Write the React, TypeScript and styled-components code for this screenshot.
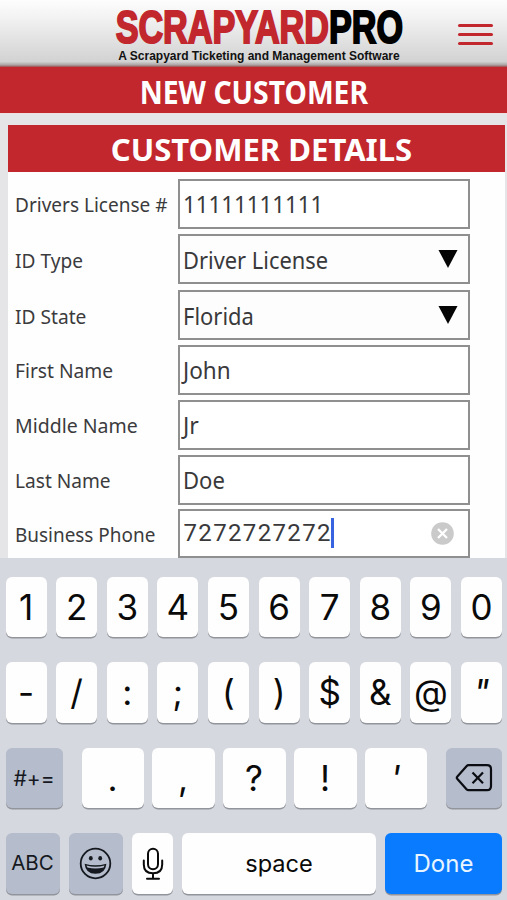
import React from 'react';
import styled, { createGlobalStyle, css } from 'styled-components';

const GlobalStyle = createGlobalStyle`
  *, *::before, *::after { box-sizing: border-box; }
  body { margin: 0; background: #e5e5e7; overflow: hidden; }
`;

const Screen = styled.main`
  width: 507px;
  height: 900px;
  display: flex;
  flex-direction: column;
  overflow: hidden;
  background: #e5e5e7;
  font-family: "Noto Sans", sans-serif;
`;

/* Condensed or expanded run of text */
const Run = styled.span<{ $scale?: number; $origin?: string }>`
  display: inline-block;
  flex: none;
  white-space: nowrap;
  transform: scaleX(${p => p.$scale ?? 1});
  transform-origin: ${p => p.$origin ?? 'left'} center;
`;

const Header = styled.header`
  flex: none;
  height: 67px;
  display: grid;
  grid-template-columns: 103px 312px 92px;
  background: linear-gradient(#fdfdfd 0%, #f3f3f3 25%, #d2d2d2 92%, #aaa3a3 97%, #a04a4c 100%);
`;

const Brand = styled.div`
  grid-column: 2;
  display: flex;
  flex-direction: column;
  align-items: center;
  padding-top: 6px;
`;

const Wordmark = styled.div`
  height: 43px;
  width: 100%;
  display: flex;
  justify-content: center;
  font: bold 45.5px/43px "Liberation Sans", Arial, sans-serif;
  color: #c1272d;
  -webkit-text-stroke: 2px #c1272d;
`;

const WordmarkDark = styled.span`
  color: #000;
  -webkit-text-stroke: 2px #000;
`;

const Tagline = styled.div`
  font: bold 12px/14px "Liberation Sans", Arial, sans-serif;
  color: #111;
  white-space: nowrap;
`;

const MenuButton = styled.button`
  border: 0;
  padding: 1px 0 0 42.5px;
  background: none;
  display: flex;
  flex-direction: column;
  justify-content: center;
  gap: 6px;
`;

const MenuBar = styled.span`
  width: 35px;
  height: 3px;
  border-radius: 2px;
  background: #c1272d;
`;

const Banner = styled.h1<{ $size: number; $height: number; $pad?: string }>`
  flex: none;
  margin: 0;
  padding: ${p => p.$pad ?? '0'};
  height: ${p => p.$height}px;
  display: flex;
  align-items: center;
  justify-content: center;
  background: #c1272d;
  color: #fff;
  font-size: ${p => p.$size}px;
  font-weight: 700;
  line-height: 1;
`;

const Body = styled.div`
  flex: 1;
  min-height: 0;
  padding: 11px 2px 0 7.5px;
  border-top: 1px solid #efdede;
`;

const Panel = styled.section`
  height: 100%;
  background: #fefefe;
  display: flex;
  flex-direction: column;
`;

const Form = styled.form`
  padding: 7.5px 0 0 7px;
  display: grid;
  grid-template-columns: 163px 292.5px;
  grid-template-rows: 55px 56px 55px 55px 55px 54px 49px;
`;

const Label = styled.label<{ $drop?: number }>`
  height: 49px;
  display: flex;
  align-items: center;
  padding-top: ${p => p.$drop ?? 2}px;
  font-size: 20.4px;
  line-height: 1;
  color: #3b3b3d;
`;

const Field = styled.div<{ $select?: boolean; $phone?: boolean }>`
  height: 49.5px;
  display: flex;
  align-items: center;
  justify-content: space-between;
  border: 2px solid #8f8f90;
  background: #fff;
  color: #39393b;
  padding: 1px 10px 0 3.5px;
  font-size: 23.6px;
  line-height: 1;
  ${Run} { padding-top: 2px; }
  ${p => p.$select && css`background: #fdfdfd; ${Run} { padding-top: 4px; }`}
  ${p => p.$phone && css`
    height: 49px;
    font: 24px/1 Roboto, sans-serif;
    letter-spacing: 1.35px;
    padding: 0 14px 1px 4px;
  `}
`;

const Entry = styled.span`
  display: flex;
  align-items: center;
`;

const Caret = styled.span`
  width: 3px;
  height: 30px;
  margin-left: -1px;
  background: #3762e0;
`;

const Keyboard = styled.section`
  flex: none;
  height: 342px;
  padding: 19px 5px 0 5.5px;
  display: flex;
  flex-direction: column;
  gap: 25.2px;
  background: #d5d8df;
  font-family: Inter, sans-serif;
`;

const KeyRow = styled.div<{ $columns: string }>`
  flex: none;
  height: 60.3px;
  display: grid;
  justify-content: space-between;
  grid-template-columns: ${p => p.$columns};
`;

const PunctuationKeys = styled.div`
  display: grid;
  grid-template-columns: 62px 63px 63px 63px 62px;
  justify-content: space-between;
`;

const Key = styled.button<{ $tone?: 'plain' | 'muted' | 'primary'; $size?: number }>`
  border: 0;
  margin: 0;
  padding: 0;
  min-width: 0;
  display: flex;
  align-items: center;
  justify-content: center;
  border-radius: 6px;
  box-shadow: 0 1.5px 0 #92959b;
  font-family: inherit;
  font-size: ${p => p.$size ?? 35}px;
  line-height: 1;
  color: #0a0a0a;
  background: #fefefe;
  ${p => p.$tone === 'muted' && css`background: #b5bccb; color: #15191f;`}
  ${p => p.$tone === 'primary' && css`background: #087bfe; color: #e9f5ff;`}
`;

/* Slanted prime marks */
const Slant = styled.span`
  display: inline-block;
  font-style: italic;
`;

const Triangle = () => (
  <svg width="20" height="18" viewBox="0 0 20 18"><path d="M.5 0h19L10 18z" fill="#050505" /></svg>
);

const ClearIcon = () => (
  <svg width="23" height="23" viewBox="0 0 23 23">
    <circle cx="11.5" cy="11.5" r="11.3" fill="#cacaca" />
    <path d="M7 7l9 9M16 7l-9 9" stroke="#fff" strokeWidth="2.3" />
  </svg>
);

const BackspaceIcon = () => (
  <svg width="38" height="30" viewBox="0 0 38 30" fill="none" stroke="#0b0d12" strokeWidth="2.2" strokeLinejoin="round">
    <path d="M13.6 2.2H32Q36 2.2 36 6.2V23Q36 27.2 32 27.2H13.6Q12.4 27.2 11.5 26.2L2.4 16Q1.2 14.7 2.4 13.4L11.5 3.2Q12.4 2.2 13.6 2.2Z" />
    <path d="M17.5 9.5l10.5 10.8M28 9.5L17.5 20.3" />
  </svg>
);

const SmileIcon = () => (
  <svg width="33" height="33" viewBox="0 0 33 33">
    <circle cx="16.5" cy="16.5" r="14.8" fill="none" stroke="#15191f" strokeWidth="1.8" />
    <ellipse cx="11.8" cy="11.3" rx="1.9" ry="2.2" fill="#15191f" />
    <ellipse cx="21.2" cy="11.3" rx="1.9" ry="2.2" fill="#15191f" />
    <path d="M5.6 16.8Q16.5 19.8 27.4 16.8Q26.5 26.8 16.5 26.8T5.6 16.8Z" fill="#15191f" />
    <path d="M7.5 18.6Q16.5 21 25.5 18.6L24.6 20.4Q16.5 22.6 8.4 20.4Z" fill="#b5bccb" />
  </svg>
);

const MicIcon = () => (
  <svg width="22" height="34" viewBox="0 0 22 34" fill="none" stroke="#0a0a0a" strokeWidth="2">
    <rect x="6" y="1.8" width="10" height="20.4" rx="5" />
    <path d="M1.8 13.5v4Q1.8 26.3 11 26.3T20.2 17.5v-4M11 26.3v5.5M5 31.8h12" strokeLinecap="round" />
  </svg>
);

const TextField = ({ label, labelScale, value, scale, select, drop }: {
  label: string; labelScale: number; value: string; scale: number; select?: boolean; drop?: number;
}) => (
  <>
    <Label $drop={drop}><Run $scale={labelScale}>{label}</Run></Label>
    <Field $select={select}>
      <Run $scale={scale}>{value}</Run>
      {select && <Triangle />}
    </Field>
  </>
);

export default function App() {
  return (
    <>
      <GlobalStyle />
      <Screen>
        <Header>
          <Brand>
            <Wordmark>
              <Run $scale={0.751} $origin="center">SCRAPYARD<WordmarkDark>PRO</WordmarkDark></Run>
            </Wordmark>
            <Tagline>A Scrapyard Ticketing and Management Software</Tagline>
          </Brand>
          <MenuButton aria-label="Menu"><MenuBar /><MenuBar /><MenuBar /></MenuButton>
        </Header>
        <Banner $size={32} $height={46} $pad="3px 0 0">
          <Run $scale={0.886} $origin="center">NEW CUSTOMER</Run>
        </Banner>
        <Body>
          <Panel>
            <Banner as="h2" $size={30.6} $height={46.5} $pad="2px 0 0 10px">
              <Run $scale={1.015} $origin="center">CUSTOMER DETAILS</Run>
            </Banner>
            <Form>
              <TextField label="Drivers License #" labelScale={0.933} value="11111111111" scale={0.945} />
              <TextField label="ID Type" labelScale={0.937} value="Driver License" scale={0.927} select drop={3} />
              <TextField label="ID State" labelScale={0.94} value="Florida" scale={0.93} select drop={3} />
              <TextField label="First Name" labelScale={0.942} value="John" scale={0.955} />
              <TextField label="Middle Name" labelScale={0.956} value="Jr" scale={0.98} drop={1} />
              <TextField label="Last Name" labelScale={0.937} value="Doe" scale={0.935} />
              <Label><Run $scale={0.928}>Business Phone</Run></Label>
              <Field $phone>
                <Entry>7272727272<Caret /></Entry>
                <ClearIcon />
              </Field>
            </Form>
          </Panel>
        </Body>
        <Keyboard>
          <KeyRow $columns="repeat(10, 41px)">
            {[...'1234567890'].map(k => <Key key={k}>{k}</Key>)}
          </KeyRow>
          <KeyRow $columns="repeat(10, 41px)">
            {[...'-/:;()$&@'].map(k => <Key key={k}>{k}</Key>)}
            <Key><Slant>"</Slant></Key>
          </KeyRow>
          <KeyRow $columns="57px 345px 56.5px">
            <Key $tone="muted" $size={21}>#+=</Key>
            <PunctuationKeys>
              {[...'.,?!'].map(k => <Key key={k}>{k}</Key>)}
              <Key><Slant>'</Slant></Key>
            </PunctuationKeys>
            <Key $tone="muted" aria-label="Delete"><BackspaceIcon /></Key>
          </KeyRow>
          <KeyRow $columns="54px 54px 41px 193.5px 117px">
            <Key $tone="muted" $size={20.5}>ABC</Key>
            <Key $tone="muted" aria-label="Emoji"><SmileIcon /></Key>
            <Key aria-label="Dictation"><MicIcon /></Key>
            <Key $size={23.6}>space</Key>
            <Key $tone="primary" $size={24}>Done</Key>
          </KeyRow>
        </Keyboard>
      </Screen>
    </>
  );
}
